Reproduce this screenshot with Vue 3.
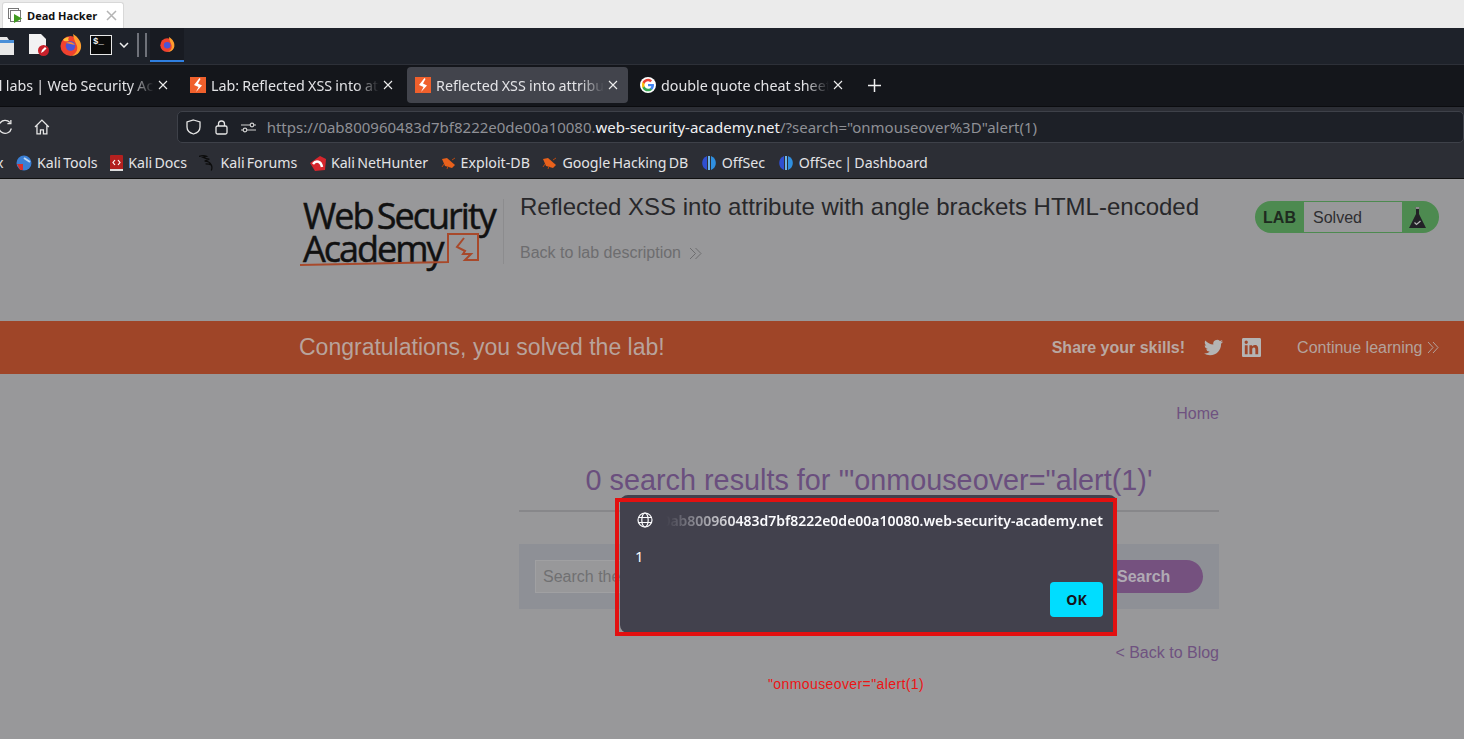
<template>
  <div class="screen">
    <div class="vm-tabs">
      <div class="vm-tab">
        <svg width="15" height="16" viewBox="0 0 15 16">
          <rect x="0.5" y="0.5" width="10" height="10" fill="none" stroke="#777" />
          <rect x="2.5" y="2.5" width="10" height="11" fill="#fff" stroke="#777" />
          <path d="M6 6v9l8-4.500z" fill="#3f9a1f" />
        </svg>
        <span class="vm-title">Dead Hacker</span>
        <svg class="vm-close" width="11" height="11" viewBox="0 0 11 11"><path d="M1 1l9 9M10 1l-9 9" stroke="#b4b4b4" stroke-width="1.500" /></svg>
      </div>
    </div>

    <div class="taskbar">
      <svg class="folder" width="14" height="18" viewBox="0 0 14 18">
        <path d="M0 0h7l2 3h5v15H0z" fill="#e8e8e8" />
        <rect x="0" y="3" width="14" height="3" fill="#4a8fd8" />
      </svg>
      <svg class="file" width="22" height="24" viewBox="0 0 22 24">
        <path d="M1 1h12l5 5v15H1z" fill="#f2f2f2" />
        <circle cx="15.500" cy="17.500" r="5.500" fill="#c9212b" />
        <path d="M13 20l1-3 3-3 1.500 1.500-3 3z" fill="#fff" />
      </svg>
      <svg class="fox" width="22" height="22" viewBox="0 0 22 22">
        <circle cx="10.500" cy="12" r="10" fill="#f0422f" />
        <path d="M13 0c5 3 9 8 8 14-1 5-5 8-10 8 5-2 7-6 6-10-1-3-3-6-4-12z" fill="#ff9f2e" />
        <path d="M3 6c1-2 4-3 6-3-1 2-1 3 0 4-3 0-4 1-6-1z" fill="#ffc23a" />
        <circle cx="10.500" cy="12" r="4.800" fill="#4a55d8" />
        <path d="M6 9c3-2 7-1 9 2-3-1-6-1-9-2z" fill="#ff8a30" />
      </svg>
      <div class="term">$_</div>
      <svg class="chev" width="10" height="6" viewBox="0 0 10 6"><path d="M1 1l4 4 4-4" fill="none" stroke="#eee" stroke-width="1.500" /></svg>
      <span class="sep"></span>
      <span class="sep second"></span>
      <div class="win-active">
        <svg width="15" height="15" viewBox="0 0 22 22">
          <circle cx="10.500" cy="12" r="10" fill="#f0422f" />
          <path d="M13 0c5 3 9 8 8 14-1 5-5 8-10 8 5-2 7-6 6-10-1-3-3-6-4-12z" fill="#ff9f2e" />
          <circle cx="10.500" cy="12" r="4.800" fill="#4a55d8" />
        </svg>
      </div>
    </div>

    <div class="tabstrip">
      <div v-for="tab in tabs" :key="tab.title" class="tab" :class="{ active: tab.active }">
        <svg v-if="tab.icon === 'google'" class="tab-icon" width="16" height="16" viewBox="0 0 24 24">
          <circle cx="12" cy="12" r="12" fill="#fff" />
          <path d="M21 12.300c0-.7-.1-1.300-.2-1.900H12v3.600h5c-.2 1.200-.9 2.100-1.900 2.800v2.300h3c1.800-1.600 2.900-4 2.900-6.800z" fill="#4285f4" />
          <path d="M12 21.500c2.500 0 4.600-.8 6.100-2.300l-3-2.300c-.8.600-1.900.9-3.100.9-2.400 0-4.400-1.600-5.100-3.800H3.800v2.400C5.300 19.400 8.400 21.500 12 21.500z" fill="#34a853" />
          <path d="M6.900 14c-.4-1.200-.4-2.700 0-4V7.600H3.800c-1 2-1 6.800 0 8.800z" fill="#fbbc05" />
          <path d="M12 6.300c1.300 0 2.500.5 3.500 1.400l2.600-2.600C16.500 3.500 14.500 2.500 12 2.500 8.400 2.500 5.300 4.600 3.800 7.600L6.900 10c.7-2.200 2.700-3.700 5.100-3.700z" fill="#ea4335" />
        </svg>
        <svg v-else class="tab-icon" width="16" height="16" viewBox="0 0 16 16">
          <rect width="16" height="16" fill="#f0602c" />
          <path d="M9.500 1L4 8l4.500 2L6 15l6-6.500L8 6.500 10.500 2z" fill="#fff" />
        </svg>
        <span class="tab-title">{{ tab.title }}</span>
        <svg class="tab-close" width="10" height="10" viewBox="0 0 10 10"><path d="M1 1l8 8M9 1L1 9" stroke="#eee" stroke-width="1.100" /></svg>
      </div>
      <svg class="plus" width="13" height="13" viewBox="0 0 13 13"><path d="M6.500 0v13M0 6.500h13" stroke="#f0f0f0" stroke-width="1.500" /></svg>
    </div>

    <div class="toolbar">
      <svg class="reload" width="16" height="16" viewBox="0 0 16 16">
        <path d="M13.500 9.500A6.500 6.500 0 1 1 12 3.500M13 1v3.500H9.500" fill="none" stroke="#e6e6e6" stroke-width="1.300" />
      </svg>
      <svg class="home" width="16" height="16" viewBox="0 0 16 16">
        <path d="M1 8l7-7 7 7M3 6.500V15h3.500v-4h3v4H13V6.500" fill="none" stroke="#e6e6e6" stroke-width="1.300" />
      </svg>
      <div class="urlbar">
        <svg width="15" height="16" viewBox="0 0 15 16">
          <path d="M7.500 1l6.500 2v5c0 3.500-3 6-6.500 7C4 14 1 11.500 1 8V3z" fill="none" stroke="#e6e6e6" stroke-width="1.300" />
        </svg>
        <svg class="lock" width="13" height="15" viewBox="0 0 13 15">
          <rect x="1" y="6" width="11" height="8" rx="1.500" fill="none" stroke="#e6e6e6" stroke-width="1.300" />
          <path d="M3.500 6V4a3 3 0 0 1 6 0v2" fill="none" stroke="#e6e6e6" stroke-width="1.300" />
        </svg>
        <svg class="tune" width="15" height="11" viewBox="0 0 15 11">
          <path d="M0 3h9M13 3h2M6 8h9M0 8h2" stroke="#d0d0d0" stroke-width="1.200" />
          <circle cx="11" cy="3" r="1.800" fill="none" stroke="#d0d0d0" stroke-width="1.200" />
          <circle cx="4" cy="8" r="1.800" fill="none" stroke="#d0d0d0" stroke-width="1.200" />
        </svg>
        <span class="url">https://0ab800960483d7bf8222e0de00a10080.<b>web-security-academy.net</b>/?search="onmouseover%3D"alert(1)</span>
      </div>
    </div>

    <div class="bookmarks">
      <span class="bm-first">Kali Linux</span>
      <div v-for="b in bookmarks" :key="b.label" class="bookmark">
        <svg v-if="b.icon === 'tools'" width="16" height="16" viewBox="0 0 16 16">
          <circle cx="8" cy="8" r="7.500" fill="#3a7fd5" />
          <path d="M1 9h6v6H4z" fill="#d8312c" />
          <path d="M8 3l6 4" stroke="#bcd8f5" stroke-width="2" />
        </svg>
        <svg v-else-if="b.icon === 'docs'" width="13" height="16" viewBox="0 0 13 16">
          <rect width="13" height="16" rx="1" fill="#b3201f" />
          <rect y="14" width="13" height="2" fill="#ddd" />
          <path d="M5 5L3 7.500 5 10M8 5l2 2.500L8 10" fill="none" stroke="#fff" stroke-width="1.200" />
        </svg>
        <svg v-else-if="b.icon === 'forums'" width="16" height="17" viewBox="0 0 17 17">
          <path d="M0 2c3-1 6-1 8 0L4 3c2 1 5 2 7 2L6 7c3 0 6 2 7 4 1 2 1 4 0 6M7 10c2 0 4 0 6 1" fill="none" stroke="#0c0c0c" stroke-width="1.300" />
        </svg>
        <svg v-else-if="b.icon === 'hunter'" width="16" height="16" viewBox="0 0 16 16">
          <path d="M0 8L10 1l6 3-1 11-10 1z" fill="#d5262d" />
          <path d="M3 9c3-4 8-3 9 3" fill="none" stroke="#fff" stroke-width="2.500" />
        </svg>
        <svg v-else-if="b.icon === 'bug'" width="15" height="14" viewBox="0 0 15 14">
          <path d="M1 3l5-1 8 7-3 3-7-2z" fill="#e8611c" />
          <path d="M3 8l-2 3M7 10l-1 3M11 4l3-2" stroke="#b9480f" />
        </svg>
        <svg v-else width="16" height="16" viewBox="0 0 16 16">
          <path d="M6 1A7.500 7.500 0 0 0 6 15z" fill="#2f4fd0" />
          <path d="M10 1a7.500 7.500 0 0 1 0 14z" fill="#2f8fe0" />
          <rect x="7" y="1" width="2" height="14" fill="#6fb5ea" />
        </svg>
        <span>{{ b.label }}</span>
      </div>
    </div>

    <div class="page">
      <header class="lab-header">
        <div class="logo">
          <div class="logo-line">Web Security</div>
          <div class="logo-line">Academy</div>
          <svg class="logo-mark" width="200" height="36" viewBox="0 0 200 36">
            <path d="M0 34l148-3V3h30v26h-13l6-6h-8l2-3-8-4 7-9" fill="none" stroke="#a8492b" stroke-width="2" />
          </svg>
        </div>
        <div class="lab-title">
          <h2>Reflected XSS into attribute with angle brackets HTML-encoded</h2>
          <a class="back-lab">Back to lab description
            <svg width="13" height="13" viewBox="0 0 13 13"><path d="M1 1l5.500 5.500L1 12M6.500 1L12 6.500 6.500 12" fill="none" stroke="#6d6d6f" /></svg>
          </a>
        </div>
        <div class="status">
          <span class="status-lab">LAB</span>
          <span class="status-text">Solved</span>
          <span class="status-flask">
            <svg width="17" height="21" viewBox="0 0 17 21">
              <path d="M6.500 0h4v2h-.5v5l7 14H0L7 7V2h-.5z" fill="#222226" />
              <rect x="6.500" y="0" width="4" height="2" fill="#8c8c8c" />
              <path d="M5.500 15.500l2 2 4-3.500" fill="none" stroke="#b5b5b5" stroke-width="1.200" />
            </svg>
          </span>
        </div>
      </header>

      <div class="solved-bar">
        <span class="congrats">Congratulations, you solved the lab!</span>
        <span class="share">Share your skills!</span>
        <svg class="share-icon" width="19" height="19" viewBox="0 0 24 24">
          <path fill="#b4b4b4" d="M23.953 4.570a10 10 0 01-2.825.775 4.958 4.958 0 002.163-2.723c-.951.555-2.005.959-3.127 1.184a4.920 4.920 0 00-8.384 4.482C7.690 8.095 4.067 6.130 1.640 3.162a4.822 4.822 0 00-.666 2.475c0 1.710.870 3.213 2.188 4.096a4.904 4.904 0 01-2.228-.616v.060a4.923 4.923 0 003.946 4.827 4.996 4.996 0 01-2.212.085 4.936 4.936 0 004.604 3.417 9.867 9.867 0 01-6.102 2.105c-.390 0-.779-.023-1.170-.067a13.995 13.995 0 007.557 2.209c9.053 0 13.998-7.496 13.998-13.985 0-.210 0-.420-.015-.630A9.935 9.935 0 0024 4.590z" />
        </svg>
        <svg class="share-icon" width="19" height="19" viewBox="0 0 24 24">
          <path fill="#b4b4b4" d="M20.447 20.452h-3.554v-5.569c0-1.328-.027-3.037-1.852-3.037-1.853 0-2.136 1.445-2.136 2.939v5.667H9.351V9h3.414v1.561h.046c.477-.900 1.637-1.850 3.370-1.850 3.601 0 4.267 2.370 4.267 5.455v6.286zM5.337 7.433c-1.144 0-2.063-.926-2.063-2.065 0-1.138.920-2.063 2.063-2.063 1.140 0 2.064.925 2.064 2.063 0 1.139-.925 2.065-2.064 2.065zm1.782 13.019H3.555V9h3.564v11.452zM22.225 0H1.771C.792 0 0 .774 0 1.729v20.542C0 23.227.792 24 1.771 24h20.451C23.200 24 24 23.227 24 22.271V1.729C24 .774 23.200 0 22.222 0h.003z" />
        </svg>
        <a class="continue">Continue learning
          <svg width="12" height="13" viewBox="0 0 12 13"><path d="M1 1l5 5.500L1 12M6 1l5 5.500L6 12" fill="none" stroke="#b4a29c" /></svg>
        </a>
      </div>

      <main class="blog">
        <a class="home-link">Home</a>
        <h1>0 search results for '"onmouseover="alert(1)'</h1>
        <hr />
        <form class="search">
          <div class="search-input">Search the blog...</div>
          <div class="search-btn">Search</div>
        </form>
        <a class="back-blog">&lt; Back to Blog</a>
        <div class="reflected">"onmouseover="alert(1)</div>
      </main>
    </div>

    <div class="dialog">
      <div class="dialog-host">
        <svg width="16" height="16" viewBox="0 0 16 16">
          <circle cx="8" cy="8" r="7" fill="none" stroke="#fbfbfe" stroke-width="1.200" />
          <ellipse cx="8" cy="8" rx="3.200" ry="7" fill="none" stroke="#fbfbfe" stroke-width="1.200" />
          <path d="M1 5.500h14M1 10.500h14" stroke="#fbfbfe" stroke-width="1.200" />
        </svg>
        <span class="host-text">0ab800960483d7bf8222e0de00a10080.web-security-academy.net</span>
      </div>
      <div class="dialog-msg">1</div>
      <div class="dialog-actions"><span class="dialog-ok">OK</span></div>
    </div>
    <div class="highlight"></div>
  </div>
</template>

<script setup>
const tabs = [
  { title: 'All labs | Web Security Academy', icon: 'burp' },
  { title: 'Lab: Reflected XSS into attribute', icon: 'burp' },
  { title: 'Reflected XSS into attribute with', icon: 'burp', active: true },
  { title: 'double quote cheat sheet xss', icon: 'google' },
]

const bookmarks = [
  { label: 'Kali Tools', icon: 'tools' },
  { label: 'Kali Docs', icon: 'docs' },
  { label: 'Kali Forums', icon: 'forums' },
  { label: 'Kali NetHunter', icon: 'hunter' },
  { label: 'Exploit-DB', icon: 'bug' },
  { label: 'Google Hacking DB', icon: 'bug' },
  { label: 'OffSec', icon: 'offsec' },
  { label: 'OffSec | Dashboard', icon: 'offsec' },
]
</script>

<style>
html,
body {
  margin: 0;
  overflow: hidden;
}
</style>

<style scoped>
.screen {
  position: relative;
  width: 1464px;
  height: 739px;
  overflow: hidden;
  display: flex;
  flex-direction: column;
  font-family: "Liberation Sans", Arial, sans-serif;
  background: #98989a;
}

.vm-tabs {
  height: 28px;
  flex: none;
  box-sizing: border-box;
  padding: 2px 0 0 2px;
  background: #ebebeb;
}

.vm-tab {
  width: 122px;
  height: 26px;
  box-sizing: border-box;
  display: flex;
  align-items: center;
  padding-left: 5px;
  background: #fff;
  border-radius: 3px 3px 0 0;
  border: 1px solid #d8d8d8;
  border-bottom: none;
}

.vm-title {
  margin-left: 4px;
  font: 700 11px "Open Sans", sans-serif;
  color: #111;
}

.vm-close {
  margin-left: 9px;
}

.taskbar {
  height: 37px;
  flex: none;
  position: relative;
  display: flex;
  align-items: center;
  padding-bottom: 2px;
  background: #1e222a;
  border-bottom: 1px solid #2d3038;
  box-sizing: border-box;
}

.folder {
  margin-left: 0;
  margin-top: 2px;
}

.file {
  margin-left: 14px;
}

.fox {
  margin-left: 10px;
}

.term {
  margin-left: 8px;
  width: 22px;
  height: 20px;
  box-sizing: border-box;
  background: #0a0a0a;
  border: 1px solid #e8e8e8;
  color: #f0f0f0;
  font: 700 9px "Liberation Mono", monospace;
  padding: 1px 2px;
}

.chev {
  margin-left: 7px;
}

.sep {
  width: 2px;
  height: 24px;
  margin-left: 8px;
  background: #6f727a;
}

.sep.second {
  margin-left: 6px;
}

.win-active {
  width: 34px;
  height: 34px;
  margin-left: 3px;
  box-sizing: border-box;
  display: flex;
  align-items: center;
  justify-content: center;
  background: #181b22;
  border-bottom: 2px solid #2f7fe0;
}

.tabstrip {
  height: 42px;
  flex: none;
  box-sizing: border-box;
  padding: 2px 0 3px;
  margin-left: -43px;
  width: 1507px;
  display: flex;
  align-items: stretch;
  gap: 4px;
  background: #14161b;
  border-bottom: 1px solid #0b0c0f;
}

.tab {
  width: 221px;
  box-sizing: border-box;
  display: flex;
  align-items: center;
  padding: 0 10px 0 8px;
  border-radius: 4px;
  color: #e3e3e6;
  font: 14.300px "Noto Sans", sans-serif;
  word-spacing: -0.500px;
}

.tab.active {
  background: #42444c;
}

.tab-icon {
  flex: none;
}

.tab-title {
  flex: 1;
  margin-left: 5px;
  overflow: hidden;
  white-space: nowrap;
  -webkit-mask-image: linear-gradient(to right, #000 86%, transparent 100%);
  mask-image: linear-gradient(to right, #000 86%, transparent 100%);
}

.tab-close {
  flex: none;
  margin-left: 4px;
}

.plus {
  margin: auto 0 auto 11px;
}

.toolbar {
  height: 40px;
  flex: none;
  box-sizing: border-box;
  display: flex;
  align-items: center;
  background: #2c2e35;
}

.reload {
  margin-left: -2px;
}

.home {
  margin-left: 20px;
}

.urlbar {
  margin-left: 127px;
  width: 1300px;
  height: 32px;
  box-sizing: border-box;
  display: flex;
  align-items: center;
  padding-left: 8px;
  background: #1d2027;
  border: 1px solid #3e4149;
  border-radius: 5px;
}

.lock {
  margin-left: 14px;
}

.tune {
  margin-left: 13px;
}

.url {
  margin-left: 11px;
  font: 15px "Noto Sans", sans-serif;
  color: #8f9096;
  white-space: nowrap;
}

.url b {
  font-weight: 400;
  color: #f0f0f2;
}

.bookmarks {
  height: 32px;
  flex: none;
  box-sizing: border-box;
  display: flex;
  align-items: center;
  gap: 12.500px;
  background: #2c2e35;
  border-bottom: 1px solid #111;
  color: #e3e3e6;
  font: 14.200px "Noto Sans", sans-serif;
  word-spacing: -1.500px;
  white-space: nowrap;
}

.bm-first {
  margin-left: -59px;
}

.bookmark {
  display: flex;
  align-items: center;
  gap: 5px;
}

.page {
  flex: 1;
  min-height: 0;
  display: flex;
  flex-direction: column;
}

.lab-header {
  height: 142px;
  flex: none;
  box-sizing: border-box;
  display: flex;
  align-items: flex-start;
  padding: 16px 25px 0 303px;
}

.logo {
  position: relative;
  width: 200px;
  height: 65px;
  border-right: 1px solid #8c8c8e;
  margin-top: 4px;
  font-family: "Open Sans", sans-serif;
  color: #111;
  font-size: 36px;
  letter-spacing: -2px;
  word-spacing: -3px;
  -webkit-text-stroke: 0.500px #111;
  line-height: 33px;
  white-space: nowrap;
}

.logo-mark {
  position: absolute;
  left: -3px;
  top: 32px;
}

.lab-title {
  margin-left: 16px;
  flex: 1;
}

.lab-title h2 {
  margin: 0;
  font-size: 24px;
  font-weight: 400;
  line-height: 24px;
  color: #28282b;
}

.back-lab {
  display: flex;
  align-items: center;
  gap: 8px;
  margin-top: 25px;
  font-size: 16px;
  color: #6d6d6f;
}

.status {
  width: 184px;
  height: 32px;
  margin: 6px 0 0;
  flex: none;
  box-sizing: border-box;
  display: flex;
  border-radius: 16px;
  background: #4d8a50;
  overflow: hidden;
  font-size: 16px;
}

.status-lab {
  width: 49px;
  text-align: center;
  line-height: 34px;
  font-weight: 700;
  color: #1e2b20;
}

.status-text {
  width: 89px;
  margin: 1px 0;
  padding-left: 9px;
  line-height: 31px;
  background: #98989a;
  color: #2e2e31;
}

.status-flask {
  flex: 1;
  display: flex;
  align-items: center;
  justify-content: center;
  padding-right: 6px;
}

.solved-bar {
  height: 53px;
  flex: none;
  box-sizing: border-box;
  display: flex;
  align-items: center;
  padding-left: 299px;
  background: #9f4528;
}

.congrats {
  font-size: 23px;
  color: #b8a39c;
}

.share {
  margin-left: 387px;
  font-size: 16px;
  font-weight: 700;
  color: #b9a8a2;
}

.share-icon {
  margin-left: 19px;
}

.continue {
  display: flex;
  align-items: center;
  gap: 4px;
  margin-left: 36px;
  font-size: 16px;
  color: #b4a29c;
}

.blog {
  width: 700px;
  margin-left: 519px;
  display: flex;
  flex-direction: column;
}

.home-link {
  align-self: flex-end;
  margin-top: 31px;
  font-size: 16px;
  line-height: 18px;
  color: #6f5280;
}

h1 {
  margin: 38px 0 0;
  font-size: 28.800px;
  font-weight: 400;
  line-height: 38px;
  text-align: center;
  color: #6a4f7e;
}

hr {
  width: 100%;
  height: 2px;
  margin: 11px 0 0;
  border: none;
  background: #87878a;
}

.search {
  height: 65px;
  margin-top: 32px;
  box-sizing: border-box;
  display: flex;
  align-items: center;
  justify-content: space-between;
  padding: 0 16px;
  background: #8e9096;
}

.search-input {
  width: 300px;
  height: 33px;
  box-sizing: border-box;
  padding-left: 7px;
  line-height: 31px;
  font-size: 16px;
  color: #707072;
  background: #98989a;
  border: 1px solid #a0a0a2;
}

.search-btn {
  width: 120px;
  height: 33px;
  box-sizing: border-box;
  padding-left: 34px;
  line-height: 33px;
  border-radius: 17px;
  font-size: 16px;
  font-weight: 700;
  color: #b0aab4;
  background: #75517f;
}

.back-blog {
  align-self: flex-end;
  margin-top: 35px;
  font-size: 16px;
  line-height: 18px;
  color: #6f5280;
}

.reflected {
  margin-top: 13px;
  padding-right: 46px;
  text-align: center;
  font-size: 14px;
  line-height: 18px;
  letter-spacing: 0.400px;
  color: #ec1414;
}

.dialog {
  position: absolute;
  left: 620px;
  top: 495px;
  width: 497px;
  height: 138px;
  box-sizing: border-box;
  padding: 17px 14px 0 17px;
  background: #42414d;
  border-radius: 8px;
  color: #fbfbfe;
}

.dialog-host {
  display: flex;
  align-items: center;
  height: 16px;
}

.host-text {
  flex: 1;
  margin-left: 4px;
  font: 600 14px "Noto Sans", sans-serif;
  text-align: right;
  overflow: hidden;
  white-space: nowrap;
  -webkit-mask-image: linear-gradient(to right, transparent 2%, #000 19%);
  mask-image: linear-gradient(to right, transparent 2%, #000 19%);
}

.dialog-msg {
  margin: 18px 0 0 -2px;
  font: 15px "Noto Sans", sans-serif;
  line-height: 20px;
}

.dialog-actions {
  display: flex;
  justify-content: flex-end;
  margin-top: 16px;
}

.dialog-ok {
  width: 53px;
  height: 35px;
  text-align: center;
  border-radius: 4px;
  background: #00ddff;
  color: #15141a;
  font: 700 14px/35px "Noto Sans", sans-serif;
}

.highlight {
  position: absolute;
  left: 615px;
  top: 498px;
  width: 502px;
  height: 138px;
  box-sizing: border-box;
  border: 4px solid #e31010;
}
</style>
